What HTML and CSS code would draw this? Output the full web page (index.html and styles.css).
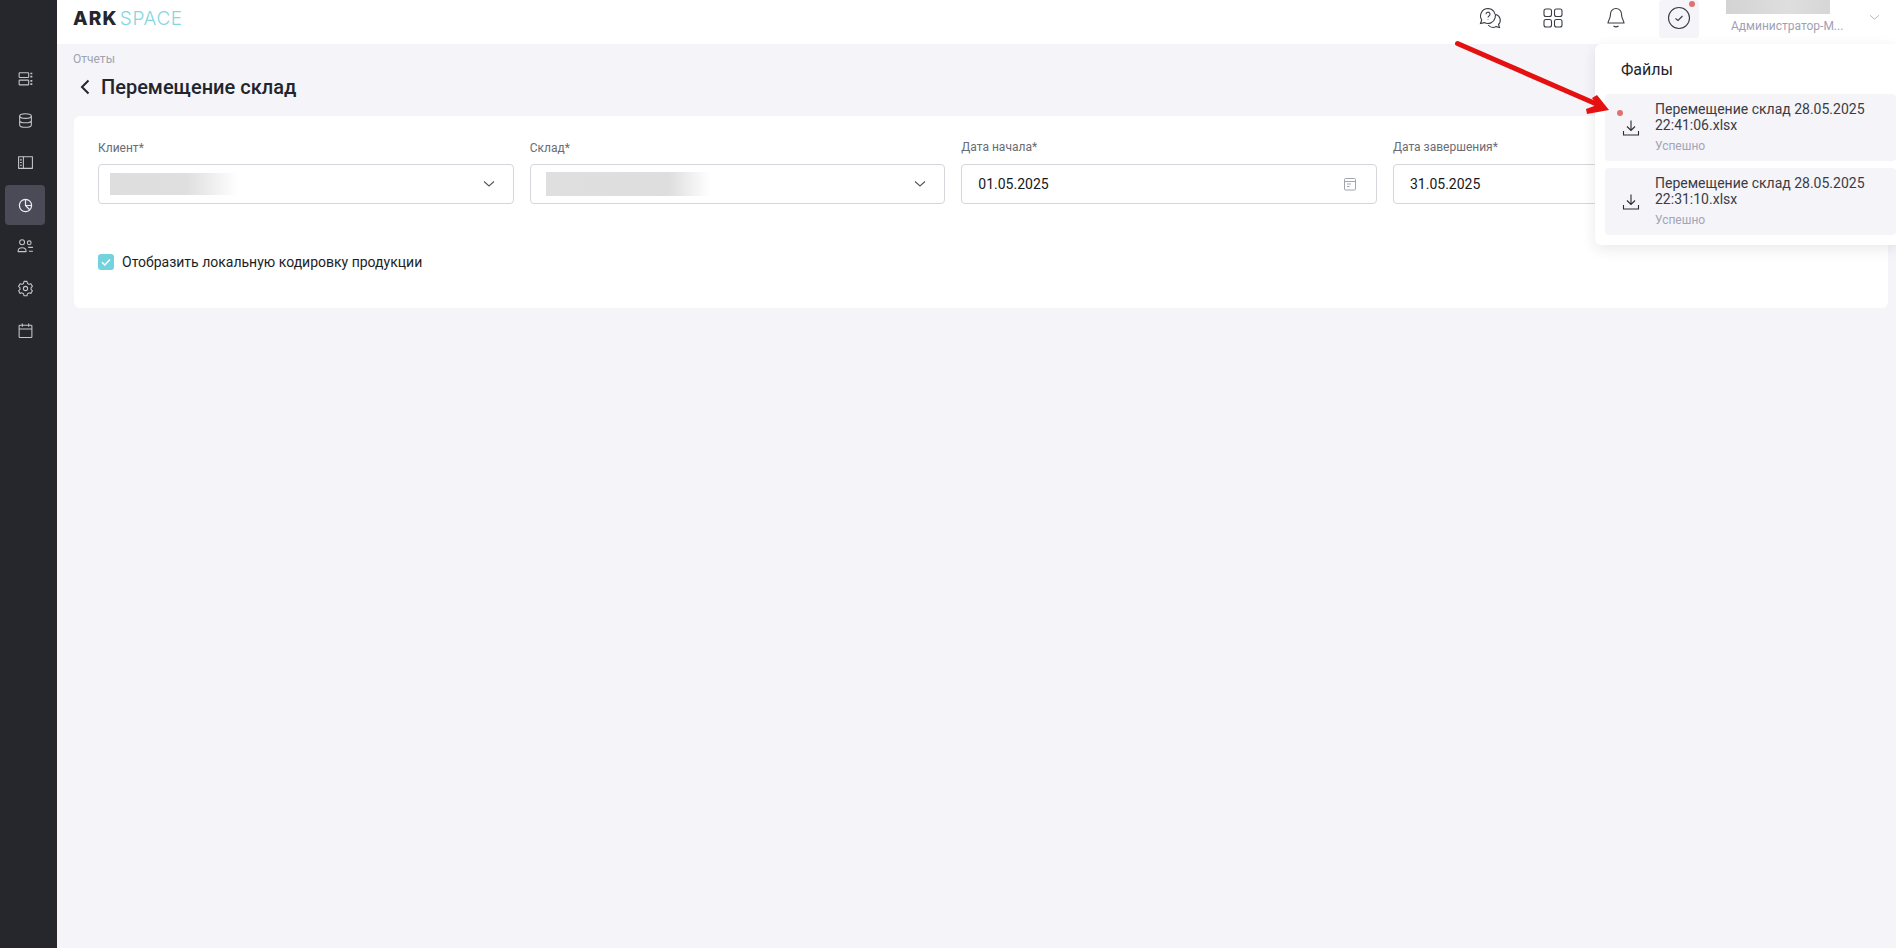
FILE: index.html
```html
<!DOCTYPE html>
<html lang="ru">
<head>
<meta charset="utf-8">
<title>Перемещение склад</title>
<link rel="stylesheet" href="styles.css">
</head>
<body>
<div class="app">
  <aside class="sidebar">
    <a class="nav-item"><svg viewBox="0 0 16 16"><rect x="2" y="2.500" width="9" height="4.500" rx=".6"/><rect x="2" y="9.500" width="9" height="4.500" rx=".6"/><path class="thick" d="M13.500 2.500v1.500M13.500 5.500v1.500M13.500 9.500v1.500M13.500 12.500v1.500"/></svg></a>
    <a class="nav-item"><svg viewBox="0 0 16 16"><ellipse cx="8" cy="3.800" rx="5.500" ry="2.200"/><path d="M2.500 3.800v8.400c0 1.200 2.500 2.200 5.500 2.200s5.500-1 5.500-2.200V3.800M2.500 8c0 1.200 2.500 2.200 5.500 2.200s5.500-1 5.500-2.200"/></svg></a>
    <a class="nav-item"><svg viewBox="0 0 16 16"><rect x="1.500" y="2.500" width="13" height="11"/><path d="M6 2.500v11M2.800 5.500h1.700M2.800 8h1.700M2.800 10.500h1.700"/></svg></a>
    <a class="nav-item active"><svg viewBox="0 0 16 16"><circle cx="8" cy="8" r="6.500"/><path d="M8 1.500V8l4.500 4.500M8 8h6.500"/></svg></a>
    <a class="nav-item"><svg viewBox="0 0 16 16"><circle cx="4.800" cy="4" r="2.300"/><circle cx="11.500" cy="4.500" r="1.800"/><path d="M1 12.800c0-2.200 1.700-3.600 3.800-3.600s3.800 1.400 3.800 3.600zM10.500 8.800h4.500M11.200 12.500h3.800"/></svg></a>
    <a class="nav-item"><svg viewBox="0 0 16 16"><circle cx="8" cy="8" r="2"/><path d="M6.600 1.300h2.800l.5 2 1.400.8 1.800-.5 1.400 2.400-1.300 1.300v1.600l1.300 1.300-1.400 2.400-1.800-.5-1.400.8-.5 2H6.600l-.5-2-1.400-.8-1.800.5-1.400-2.400 1.300-1.300V7.300L1.500 6l1.400-2.400 1.800.5 1.400-.8z"/></svg></a>
    <a class="nav-item"><svg viewBox="0 0 16 16"><rect x="2" y="3" width="12" height="11.500" rx=".6"/><path d="M2 6.500h12M5 1.500v3M11 1.500v3"/></svg></a>
  </aside>
  <div class="content">
    <header class="topbar">
      <div class="logo"><span class="logo-dark">ARK</span><span class="logo-light">SPACE</span></div>
      <div class="top-actions">
        <button class="top-btn"><svg viewBox="0 0 24 24"><path d="M10 2.500a7.500 7.500 0 0 0-6.300 11.500L2.500 17.500l3.800-.9A7.500 7.500 0 1 0 10 2.500z"/><path d="M18 8.500a6 6 0 0 1 2.500 10l1 3-3.300-.9a6.500 6.500 0 0 1-8-1.600"/><path d="M8 8.200a2 2 0 1 1 3 1.700c-.7.400-1 .8-1 1.600M10 13.500v.5"/></svg></button>
        <button class="top-btn"><svg viewBox="0 0 24 24"><rect x="3" y="3" width="7.500" height="7.500" rx="2"/><rect x="13.500" y="3" width="7.500" height="7.500" rx="2"/><rect x="3" y="13.500" width="7.500" height="7.500" rx="2"/><rect x="13.500" y="13.500" width="7.500" height="7.500" rx="2"/></svg></button>
        <button class="top-btn"><svg viewBox="0 0 24 24"><path d="M12 2.500a5.500 5.500 0 0 0-5.500 5.500c0 5.500-2.500 6.500-2.500 9h16c0-2.500-2.500-3.500-2.500-9A5.500 5.500 0 0 0 12 2.500z"/><path d="M9.500 20c1.500 1 3.500 1 5 0"/></svg></button>
        <button class="top-btn current"><svg viewBox="0 0 24 24"><circle cx="12" cy="12" r="10.500"/><path d="M8.500 12.500l2.500 2 4.500-4.500"/></svg><span class="red-dot"></span></button>
      </div>
      <div class="user">
        <div class="user-name"></div>
        <div class="user-role">Администратор-М...</div>
      </div>
      <svg class="user-chevron" viewBox="0 0 12 8"><path d="M1 1.500l5 4.500 5-4.500"/></svg>
    </header>
    <main class="main">
      <div class="crumb">Отчеты</div>
      <div class="title-row">
        <svg class="back" viewBox="0 0 10 16"><path d="M8.500 1.500L2 8l6.500 6.500"/></svg>
        <h1 class="title">Перемещение склад</h1>
      </div>
      <section class="card">
        <div class="fields">
          <div class="field">
            <label class="label">Клиент*</label>
            <div class="control"><span class="blur blur-a"></span><svg class="chev" viewBox="0 0 12 8"><path d="M1 1.500l5 4.500 5-4.500"/></svg></div>
          </div>
          <div class="field">
            <label class="label">Склад*</label>
            <div class="control"><span class="blur blur-b"></span><svg class="chev" viewBox="0 0 12 8"><path d="M1 1.500l5 4.500 5-4.500"/></svg></div>
          </div>
          <div class="field">
            <label class="label label-date">Дата начала*</label>
            <div class="control date">01.05.2025<svg class="cal" viewBox="0 0 14 14"><rect x="1.500" y="1.500" width="11" height="11.500" rx="1"/><path d="M1.500 4.500h11M4 7h4M4 9.500h2.500"/></svg></div>
          </div>
          <div class="field">
            <label class="label label-date">Дата завершения*</label>
            <div class="control date">31.05.2025<svg class="cal" viewBox="0 0 14 14"><rect x="1.500" y="1.500" width="11" height="11.500" rx="1"/><path d="M1.500 4.500h11M4 7h4M4 9.500h2.500"/></svg></div>
          </div>
        </div>
        <label class="check">
          <span class="box"><svg viewBox="0 0 16 16"><path d="M4 8.200l2.800 2.800L12 5.500"/></svg></span>
          Отобразить локальную кодировку продукции
        </label>
      </section>
    </main>
  </div>
</div>
<div class="panel">
  <div class="panel-title">Файлы</div>
  <div class="file">
    <span class="file-dot"></span>
    <svg class="dl" viewBox="0 0 18 18"><path d="M9 1.500v10M5 7.500l4 4 4-4M1.500 12v4h15v-4"/></svg>
    <div class="file-body">
      <div class="file-name">Перемещение склад 28.05.2025 22:41:06.xlsx</div>
      <div class="file-status">Успешно</div>
    </div>
  </div>
  <div class="file">
    <svg class="dl" viewBox="0 0 18 18"><path d="M9 1.500v10M5 7.500l4 4 4-4M1.500 12v4h15v-4"/></svg>
    <div class="file-body">
      <div class="file-name">Перемещение склад 28.05.2025 22:31:10.xlsx</div>
      <div class="file-status">Успешно</div>
    </div>
  </div>
</div>
<svg class="arrow" viewBox="0 0 160 80"><path class="arrow-line" d="M3.500 3.500L147 66"/><path class="arrow-head" d="M155 70L143 55L138 58L143 65L132 69L133 74z"/></svg>
</body>
</html>
```
FILE: styles.css
```css
* { box-sizing: border-box; }
html, body { margin: 0; height: 100%; overflow: hidden; }
body { font-family: Roboto, "Liberation Sans", sans-serif; background: #f4f4f9; color: #22252c; }
.app { display: flex; height: 948px; }
.sidebar { width: 57px; flex: none; background: #25272d; padding: 59px 7px 0 0; display: flex; flex-direction: column; align-items: center; gap: 2px; }
.nav-item { width: 40px; height: 40px; padding-bottom: 2px; border-radius: 4px; display: flex; align-items: center; justify-content: center; }
.nav-item svg { width: 17px; height: 17px; fill: none; stroke: #c4c6cc; stroke-width: 1; stroke-linejoin: round; }
.nav-item svg .thick { stroke-width: 1.800; }
.nav-item.active { background: #4a4b57; padding-bottom: 0; }
.nav-item.active svg { stroke: #eceef2; stroke-width: 1.300; width: 15px; height: 15px; }
.content { flex: 1; min-width: 0; display: flex; flex-direction: column; }
.topbar { height: 44px; background: #fff; display: flex; align-items: center; padding-left: 16px; position: relative; }
.logo { display: flex; align-items: baseline; line-height: 1; margin-top: -7px; }
.logo-dark { font-family: Inter, sans-serif; font-weight: 800; font-size: 19px; letter-spacing: 1.200px; color: #25272e; }
.logo-light { font-family: Inter, sans-serif; font-weight: 300; font-size: 19px; letter-spacing: .6px; color: #86d6de; margin-left: 2px; }
.top-actions { margin-left: auto; display: flex; gap: 23px; margin-top: -6px; height: 38px; }
.top-btn { width: 40px; height: 38px; padding: 0 0 2px; border: 0; background: none; border-radius: 4px; position: relative; display: flex; align-items: center; justify-content: center; }
.top-btn svg { width: 24px; height: 24px; fill: none; stroke: #3a3d45; stroke-width: 1.100; }
.top-btn.current { background: #f4f4f9; }
.red-dot { position: absolute; top: 1px; right: 4px; width: 6px; height: 6px; border-radius: 50%; background: #e0716f; }
.user { width: 129px; margin-left: 27px; align-self: flex-start; }
.user-name { width: 104px; height: 14px; background: linear-gradient(90deg, #d3d3d3, #dedede 60%, #d6d6d6); }
.user-role { font-size: 12px; line-height: 14px; margin-top: 5px; margin-left: 5px; color: #9fa1b3; white-space: nowrap; }
.user-chevron { width: 11px; height: 7px; margin-left: 14px; margin-right: 16px; margin-top: -10px; fill: none; stroke: #a8abb8; stroke-width: 1; }
.main { flex: 1; padding: 6px 7px 0 16px; }
.crumb { font-size: 12px; line-height: 16px; color: #a0a2ad; padding-top: 1px; }
.title-row { display: flex; align-items: center; gap: 11px; margin-top: 7px; height: 26px; }
.back { width: 10px; height: 16px; margin-left: 7px; fill: none; stroke: #22252c; stroke-width: 2; }
.title { margin: 0; font-size: 20px; font-weight: 500; color: #22252c; line-height: 26px; }
.card { margin: 16px 1px 0; height: 192px; background: #fff; border-radius: 6px; padding: 23px 24px 0; }
.fields { display: grid; grid-template-columns: repeat(4, 415.67px); gap: 16px; }
.label { display: block; font-size: 12px; line-height: 16px; color: #6a6c75; margin-bottom: 8px; margin-top: 1px; }
.label-date { margin-top: 0; margin-bottom: 9px; }
.control { height: 40px; border: 1px solid #d5d6db; border-radius: 4px; background: #fff; display: flex; align-items: center; position: relative; padding: 0 16px; font-size: 14px; color: #16181d; }
.blur { display: block; height: 22px; }
.blur-a { width: 128px; margin-left: -5px; background: linear-gradient(90deg, #dedede, #dfdfdf 60%, #fff); }
.blur-b { width: 164px; margin-left: -1px; height: 24px; background: linear-gradient(90deg, #dfdfdf, #dedede 75%, #fff); }
.chev { width: 12px; height: 8px; margin-left: auto; margin-right: 2px; fill: none; stroke: #55575f; stroke-width: 1.100; }
.cal { width: 14px; height: 14px; margin-left: auto; margin-right: 3px; fill: none; stroke: #a3a5ae; stroke-width: 1; }
.check { display: flex; align-items: center; gap: 8px; margin-top: 49px; font-size: 14px; line-height: 18px; color: #1c1e24; }
.box { width: 16px; height: 16px; border-radius: 3px; background: #72d3de; display: flex; }
.box svg { width: 16px; height: 16px; fill: none; stroke: #fff; stroke-width: 1.500; }
.panel { position: absolute; left: 1595px; top: 44px; width: 301px; height: 201px; background: #fff; border-radius: 6px 0 0 6px; box-shadow: 0 4px 14px rgba(40, 42, 60, .1); padding: 14px 0 9px 10px; }
.panel-title { font-size: 16px; line-height: 24px; color: #22252c; padding-left: 16px; margin-bottom: 12px; }
.file { position: relative; height: 67px; background: #f4f4f9; border-radius: 4px; margin-bottom: 7px; display: flex; align-items: center; padding-left: 17px; }
.file:last-child { margin-bottom: 0; }
.file-dot { position: absolute; left: 12px; top: 16px; width: 6px; height: 6px; border-radius: 50%; background: #e0716f; }
.dl { width: 18px; height: 18px; flex: none; fill: none; stroke: #2a2c33; stroke-width: 1.100; }
.file-body { margin-left: 15px; width: 225px; margin-top: -1px; }
.file-name { font-size: 14px; line-height: 16px; color: #3a3c45; }
.file-status { font-size: 12px; line-height: 14px; margin-top: 6px; color: #a3a5b5; }
.arrow { position: absolute; left: 1454px; top: 40px; width: 160px; height: 80px; }
.arrow-line { fill: none; stroke: #e51010; stroke-width: 5; stroke-linecap: round; }
.arrow-head { fill: #e51010; }
```
